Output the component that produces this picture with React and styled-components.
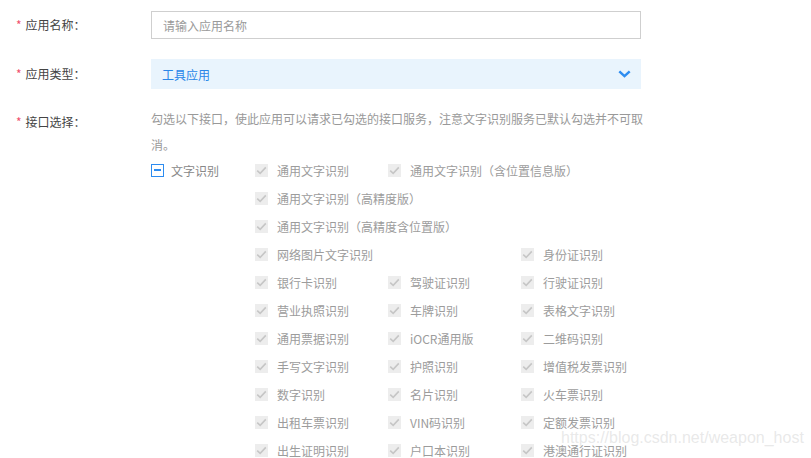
import styled, { createGlobalStyle } from 'styled-components'

const GlobalStyle = createGlobalStyle`
    html, body {
        margin:0;
        padding:0;
        background:#fff;
    }
    body {
        font-family:"Microsoft YaHei", "Noto Sans CJK SC", "Liberation Sans", sans-serif;
        font-size:12px;
        color:#333;
    }
`;

const Page = styled.div`
    position:relative;
    width:811px;
    height:458px;
    overflow:hidden;
    padding-top:11px;
    box-sizing:border-box;
`;

const FormRow = styled.div`
    display:flex;
    align-items:flex-start;
    margin-bottom:${p => p.gap || 20}px;
`;

const Label = styled.div`
    width:151px;
    flex:none;
    box-sizing:border-box;
    padding-left:16px;
    line-height:${p => p.lh || 28}px;
    font-size:12px;
    color:#444;
    white-space:nowrap;
    &::before{
        content:'*';
        color:#f0506e;
        margin-right:4px;
    }
`;

const TextInput = styled.input`
    width:490px;
    height:28px;
    box-sizing:border-box;
    border:1px solid #cfcfcf;
    padding:0 11px;
    font-family:inherit;
    font-size:12px;
    color:#333;
    outline:none;
    &::placeholder{
        color:#9a9a9a;
    }
`;

const Select = styled.div`
    width:490px;
    height:30px;
    box-sizing:border-box;
    background:#e9f4fd;
    display:flex;
    align-items:center;
    justify-content:space-between;
    padding:0 10px 0 11px;
    color:#2a86e8;
    font-size:12px;
`;

const Field = styled.div`
    display:flex;
    flex-direction:column;
`;

const Hint = styled.p`
    margin:0;
    width:500px;
    line-height:26px;
    color:#999;
    font-size:12px;
`;

const Group = styled.div`
    display:flex;
    margin-top:-2px;
`;

const Parent = styled.div`
    width:104px;
    flex:none;
    height:28px;
    display:flex;
    align-items:center;
    gap:7px;
    color:#888;
`;

const Children = styled.div`
    display:grid;
    grid-template-columns:repeat(3, 133px);
    grid-auto-rows:28px;
`;

const Item = styled.label`
    grid-column:span ${p => p.span || 1};
    display:flex;
    align-items:center;
    gap:9px;
    color:#9c9c9c;
    white-space:nowrap;
`;

const Box = styled.span`
    width:13px;
    height:13px;
    flex:none;
    box-sizing:border-box;
    display:flex;
    align-items:center;
    justify-content:center;
    background:${p => p.partial ? '#fff' : '#ededed'};
    border:${p => p.partial ? '1.5px solid #2d8cf0' : 'none'};
`;

const Dash = styled.span`
    width:7px;
    height:2px;
    background:#2d8cf0;
`;

const Watermark = styled.div`
    position:absolute;
    left:561px;
    top:429px;
    font-family:"Liberation Sans", Arial, sans-serif;
    font-size:16px;
    color:rgba(205,205,205,0.45);
    pointer-events:none;
    white-space:nowrap;
`;

const rows = [
    [['通用文字识别'], ['通用文字识别（含位置信息版）', 2]],
    [['通用文字识别（高精度版）', 3]],
    [['通用文字识别（高精度含位置版）', 3]],
    [['网络图片文字识别', 2], ['身份证识别']],
    [['银行卡识别'], ['驾驶证识别'], ['行驶证识别']],
    [['营业执照识别'], ['车牌识别'], ['表格文字识别']],
    [['通用票据识别'], ['iOCR通用版'], ['二维码识别']],
    [['手写文字识别'], ['护照识别'], ['增值税发票识别']],
    [['数字识别'], ['名片识别'], ['火车票识别']],
    [['出租车票识别'], ['VIN码识别'], ['定额发票识别']],
    [['出生证明识别'], ['户口本识别'], ['港澳通行证识别']],
];

function Check(){
    return (
        <Box>
            <svg width="11" height="9" viewBox="0 0 11 9" fill="none">
                <path d="M1.2 4.6L4.2 7.4L9.8 1.4" stroke="#c6c6c6" strokeWidth="1.6"/>
            </svg>
        </Box>
    )
}

function App(){
    return (
        <Page>
            <GlobalStyle/>
            <FormRow gap={20}>
                <Label>应用名称：</Label>
                <TextInput placeholder="请输入应用名称"/>
            </FormRow>
            <FormRow gap={17}>
                <Label lh={30}>应用类型：</Label>
                <Select>
                    <span>工具应用</span>
                    <svg width="13" height="8" viewBox="0 0 13 8" fill="none">
                        <path d="M1.3 1.3L6.5 6.2L11.7 1.3" stroke="#2d8cf0" strokeWidth="2.4"/>
                    </svg>
                </Select>
            </FormRow>
            <FormRow>
                <Label lh={32}>接口选择：</Label>
                <Field>
                    <Hint>勾选以下接口，使此应用可以请求已勾选的接口服务，注意文字识别服务已默认勾选并不可取消。</Hint>
                    <Group>
                        <Parent>
                            <Box partial><Dash/></Box>
                            文字识别
                        </Parent>
                        <Children>
                            {rows.map((row, i) => row.map(([name, span], j) => (
                                <Item key={i + '-' + j} span={span}>
                                    <Check/>
                                    {name}
                                </Item>
                            )))}
                        </Children>
                    </Group>
                </Field>
            </FormRow>
            <Watermark>https://blog.csdn.net/weapon_host</Watermark>
        </Page>
    )
}

export default App;
